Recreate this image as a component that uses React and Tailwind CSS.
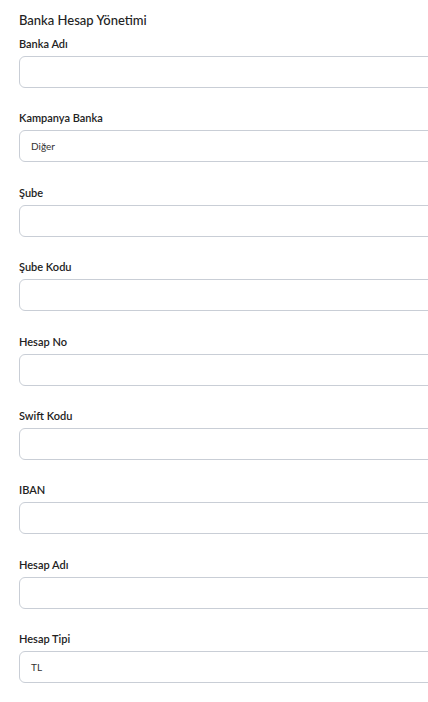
export default function App() {
  const fields = [
    { label: "Banka Adı", value: "" },
    { label: "Kampanya Banka", value: "Diğer" },
    { label: "Şube", value: "" },
    { label: "Şube Kodu", value: "" },
    { label: "Hesap No", value: "" },
    { label: "Swift Kodu", value: "" },
    { label: "IBAN", value: "" },
    { label: "Hesap Adı", value: "" },
    { label: "Hesap Tipi", value: "TL" },
  ];
  return (
    <div
      className="w-[428px] h-[702px] overflow-hidden bg-white text-[#222]"
      style={{ fontFamily: "Lato, 'Noto Sans', sans-serif" }}
    >
      <div className="pl-[19px] pt-[12px]">
        <h1 className="text-[13px] leading-[16px] font-medium text-[#222]">Banka Hesap Yönetimi</h1>
        <div className="mt-[9px]">
          {fields.map((f) => (
            <div key={f.label} className="mb-[23.4px]">
              <div className="text-[11px] leading-[14px] font-semibold text-[#222] mb-[5px]">{f.label}</div>
              <div className="w-[440px] h-[32px] rounded-[6px] border border-[#c9ced6] flex items-center pl-[11px] text-[10px] text-[#333]">
                {f.value}
              </div>
            </div>
          ))}
        </div>
      </div>
    </div>
  );
}
